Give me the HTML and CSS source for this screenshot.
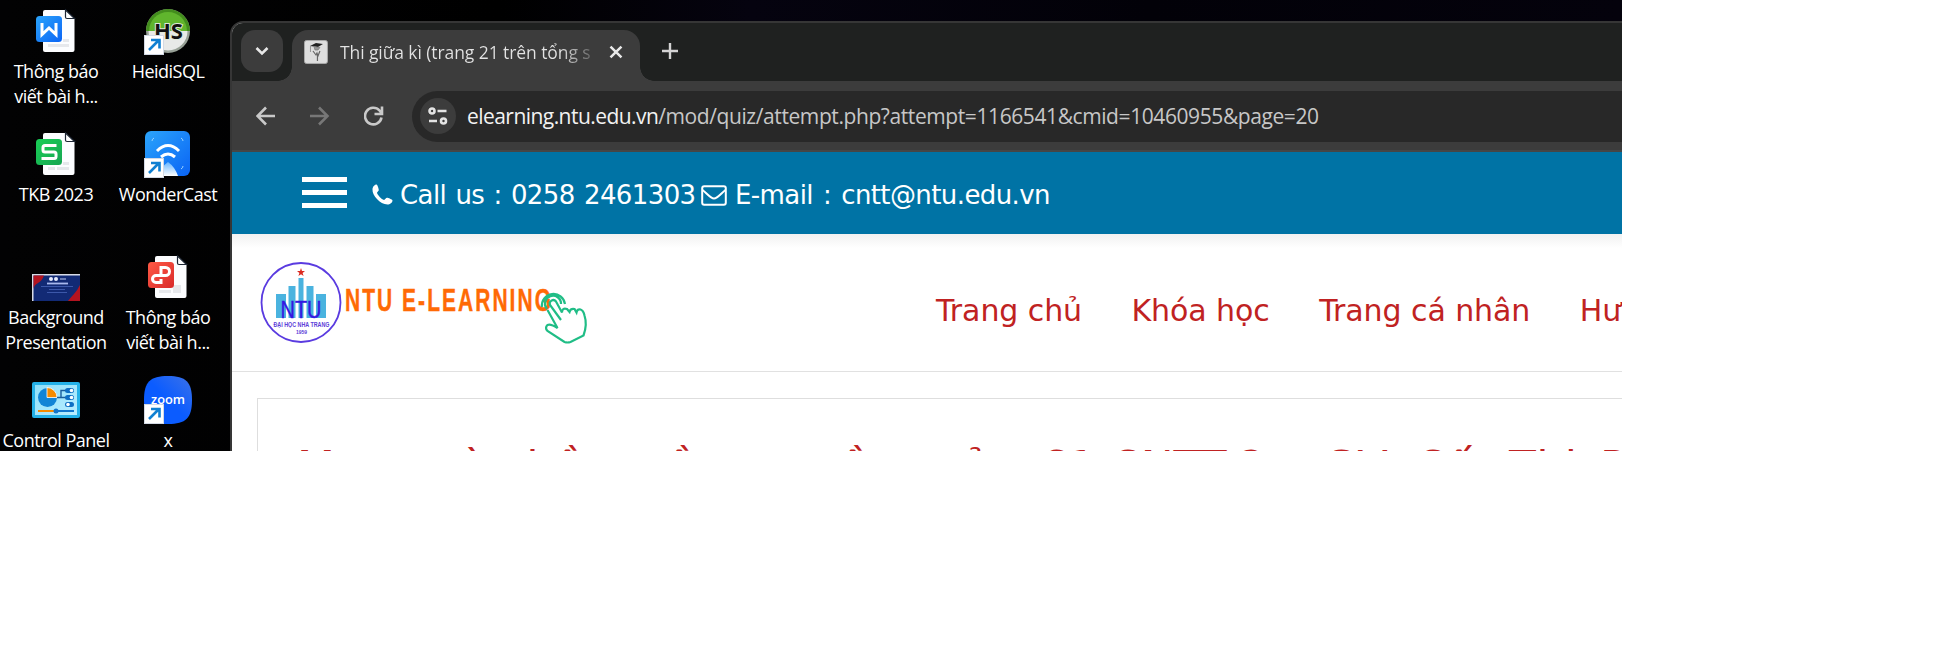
FILE: index.html
```html
<!DOCTYPE html>
<html lang="vi">
<head>
<meta charset="utf-8">
<title>Thi giữa kì</title>
<link rel="stylesheet" href="styles.css">
</head>
<body>
<svg width="0" height="0" class="defs">
  <defs>
    <linearGradient id="blue" x1="0" y1="0" x2="1" y2="1"><stop offset="0" stop-color="#2ba4fb"/><stop offset="1" stop-color="#0a64f5"/></linearGradient>
    <linearGradient id="green" x1="0" y1="0" x2="1" y2="1"><stop offset="0" stop-color="#19cf56"/><stop offset="1" stop-color="#16a552"/></linearGradient>
    <linearGradient id="red" x1="0" y1="0" x2="1" y2="1"><stop offset="0" stop-color="#ff5a45"/><stop offset="1" stop-color="#d92a2b"/></linearGradient>
    <linearGradient id="beam" x1="0" y1="0" x2="0" y2="1"><stop offset="0" stop-color="#66b5ff"/><stop offset="1" stop-color="#fff"/></linearGradient>
    <linearGradient id="zoomg" x1="0" y1="1" x2="1" y2="0"><stop offset="0.5" stop-color="#0b5cff"/><stop offset="1" stop-color="#3c72e8"/></linearGradient>
    <linearGradient id="panel" x1="0" y1="0" x2="1" y2="1"><stop offset="0" stop-color="#8fe0fa"/><stop offset="1" stop-color="#b9edff"/></linearGradient>
    <g id="page">
      <path d="M21 3h21l8.500 9v31a2 2 0 0 1-2 2H21a2 2 0 0 1-2-2V5a2 2 0 0 1 2-2z" fill="#fcfdff"/>
      <path d="M41.500 3v7a1.500 1.500 0 0 0 1.500 1.500h7.500z" fill="#fff" stroke="#1c2532" stroke-width="1.200"/>
    </g>
    <g id="shortcut">
      <rect x="0.500" y="28.500" width="19" height="19" fill="#fff" stroke="#d3d9e4"/>
      <path d="M5 43L15 33M7 33h8.500v8.500" fill="none" stroke="#1080d2" stroke-width="2.600"/>
    </g>
  </defs>
</svg>
<main class="shot">
  <section class="desktop">
    <div class="item">
      <svg width="56" height="48" viewBox="8 0 56 48"><use href="#page" x="4"/><path d="M43 33.500h6M28 38.500h21" stroke="#e6e8ec" stroke-width="3"/><rect x="16" y="9" width="26" height="26" rx="3.500" fill="url(#blue)"/><path d="M22 16v11.500l7-6.500 7 6.500V16" fill="none" stroke="#fff" stroke-width="3"/></svg>
      <p>Thông báo<br>viết bài h...</p>
    </div>
    <div class="item">
      <svg width="48" height="48" viewBox="0 0 48 48"><circle cx="24" cy="24" r="22" fill="#97a096"/><circle cx="24" cy="24" r="19.500" fill="#e8e9e8"/><path d="M2 24a22 22 0 0 1 44 0z" fill="#438d1d"/><path d="M5 24a19 19 0 0 1 38 0z" fill="#60b52d"/><text x="24.500" y="31.500" text-anchor="middle" class="hs">HS</text><use href="#shortcut"/></svg>
      <p>HeidiSQL</p>
    </div>
    <div class="item">
      <svg width="56" height="48" viewBox="8 0 56 48"><use href="#page" x="4"/><path d="M43 33.500h6M28 38.500h7M37 38.500h12" stroke="#e6e8ec" stroke-width="3"/><rect x="16" y="9" width="26" height="26" rx="3.500" fill="url(#green)"/><path d="M36.500 15.500H25a2 2 0 0 0-2 2V20a2 2 0 0 0 2 2h9a2 2 0 0 1 2 2v2.500a2 2 0 0 1-2 2H21.500" fill="none" stroke="#fff" stroke-width="3"/></svg>
      <p>TKB 2023</p>
    </div>
    <div class="item">
      <svg width="48" height="48" viewBox="0 0 48 48"><rect x="1" y="1" width="45" height="45" rx="6" fill="url(#blue)"/><path d="M13 21q11-11 22 0M17 27q7-6 14 0" fill="none" stroke="#fff" stroke-width="3"/><path d="M24 32q7 5 10 14H14q3-9 10-14z" fill="url(#beam)"/><path d="M8 11q0-2 2-3M37 8q2 1 2 3M39 36q0 2-2 3" fill="none" stroke="#9dd5ff"/><use href="#shortcut"/></svg>
      <p>WonderCast</p>
    </div>
    <div class="item">
      <svg width="48" height="48" viewBox="0 0 48 48"><rect x="0" y="21" width="48" height="27" fill="#122a75"/><path d="M0 21h48v1.500H1.500V48H0z" fill="#d8dbe6"/><path d="M1.500 22.500H12Q10 28 6 30t-4.500 6zM48 32q-3 6-6 9t-6 7h12z" fill="#b3131f"/><circle cx="19" cy="26" r="2" fill="#e7ecff"/><circle cx="24" cy="26" r="2" fill="#e7ecff"/><path d="M28 26h6" stroke="#c4cff5"/><path d="M15 30.500h21" stroke="#a9b9ee" stroke-width="1.800"/><path d="M9 33.500h32M17 36.500h16M15 39.500h20" stroke="#4865b8" stroke-width=".8"/></svg>
      <p>Background<br>Presentation</p>
    </div>
    <div class="item">
      <svg width="56" height="48" viewBox="8 0 56 48"><use href="#page" x="4"/><path d="M27 38.500h12" stroke="#e6e8ec" stroke-width="3"/><path d="M41 32h8v8h-8z" fill="#e6e8ec"/><rect x="16" y="9" width="26" height="26" rx="3.500" fill="url(#red)"/><path d="M29 21v-6.500h4.500a4 4 0 0 1 0 8H24a3.500 3.500 0 0 0 0 7h5V26" fill="none" stroke="#fff" stroke-width="3"/></svg>
      <p>Thông báo<br>viết bài h...</p>
    </div>
    <div class="item">
      <svg width="48" height="48" viewBox="0 0 48 48"><rect x="0" y="6" width="48" height="36" rx="2" fill="#24b1e8"/><rect x="3" y="9" width="42" height="30" fill="url(#panel)"/><circle cx="15.500" cy="21.500" r="9.500" fill="#1284d6"/><path d="M15 21.500V11.500a10 10 0 0 1 10 10z" fill="#f58b00" stroke="#fff" stroke-width=".8"/><path d="M25 21.500h4v-7h5M29 21.500h5" fill="none" stroke="#1a5d9c" stroke-width="1.400"/><g fill="#0f6fc4"><rect x="33" y="12" width="9" height="5" rx="2.500"/><rect x="33" y="19" width="9" height="5" rx="2.500"/><rect x="33" y="26" width="9" height="5" rx="2.500"/></g><g fill="#fff"><circle cx="39.500" cy="14.500" r="1.800"/><circle cx="39.500" cy="21.500" r="1.800"/><circle cx="36" cy="28.500" r="1.800"/></g><path d="M6 35h17" stroke="#f58b00" stroke-width="2"/><path d="M24 35h18" stroke="#1176cd" stroke-width="2"/><circle cx="24" cy="35" r="2.500" fill="#1176cd"/></svg>
      <p>Control Panel</p>
    </div>
    <div class="item">
      <svg width="48" height="48" viewBox="0 0 48 48"><path d="M24 0C42 0 48 6 48 24S42 48 24 48 0 42 0 24 6 0 24 0z" fill="url(#zoomg)"/><text x="7" y="28" textLength="34" lengthAdjust="spacingAndGlyphs" class="zoom">zoom</text><use href="#shortcut"/></svg>
      <p>x</p>
    </div>
  </section>

  <section class="window">
    <div class="tabs">
      <span class="tab-search"><svg width="14" height="10" viewBox="0 0 14 10"><path d="M1.500 2l5.500 5.500L12.500 2" fill="none" stroke="#e8e8e8" stroke-width="2.600"/></svg></span>
      <div class="tab">
        <svg class="favicon" width="24" height="24" viewBox="0 0 24 24"><rect x="0.500" y="0.500" width="23" height="23" rx="2" fill="#dedede" stroke="#aaa"/><path d="M6 6l6-3 7 1-5 3z" fill="#222"/><path d="M6.500 6v6M10 6.500l6 1-2 2.500h-3z" fill="#999" stroke="#777" stroke-width=".7"/><path d="M9 11l3 4 1-2 1 3 2-5M13.500 15v6" fill="none" stroke="#666" stroke-width="1.200"/></svg>
        <span class="tab-title">Thi giữa kì (trang 21 trên tổng s</span>
        <svg width="14" height="14" viewBox="0 0 14 14"><path d="M1.500 1.500l11 11M12.500 1.500l-11 11" stroke="#e8e8e8" stroke-width="2.500"/></svg>
      </div>
      <svg class="plus" width="16" height="16" viewBox="0 0 16 16"><path d="M8 0v16M0 8h16" stroke="#d4d4d4" stroke-width="2.400"/></svg>
    </div>
    <div class="toolbar">
      <svg class="nav-icon" width="20" height="20" viewBox="0 0 20 20"><path d="M19 10H2M10 1.500L1.500 10l8.500 8.500" fill="none" stroke="#c9c9c9" stroke-width="2.600"/></svg>
      <svg class="nav-icon" width="20" height="20" viewBox="0 0 20 20"><path d="M0 10h17M9 1.500l8.500 8.500L9 18.500" fill="none" stroke="#777" stroke-width="2.600"/></svg>
      <svg class="nav-icon" width="20" height="20" viewBox="0 0 20 20"><path d="M17.500 11.500A8.300 8.300 0 1 1 15.500 4.500l2 2.500M18 .5V8h-7.500" fill="none" stroke="#c9c9c9" stroke-width="2.600"/></svg>
      <div class="omnibox">
        <span class="site-info"><svg width="20" height="18" viewBox="0 0 20 18"><g fill="none" stroke="#e4e4e4" stroke-width="2.600"><circle cx="4" cy="4" r="2.500"/><path d="M9.500 4h9M1 14h8"/><circle cx="15.500" cy="14" r="2.500"/></g></svg></span>
        <span class="url"><b>elearning.ntu.edu.vn</b>/mod/quiz/attempt.php?attempt=1166541&amp;cmid=10460955&amp;page=20</span>
      </div>
    </div>
    <div class="contact">
      <span class="menu"><i></i><i></i><i></i></span>
      <svg class="phone" width="21" height="21" viewBox="0 0 21 21"><path d="M20.500 16.500c0 2-2.500 4-5 4C8 20.500 0 11 .5 5.500.5 3 2.500.5 4.500.5 5.500.5 6.800 5 6.800 6S5 8 5 8.800C5.500 11 9.500 15.500 12 16c1 0 2-2.200 3-2.200s5.500 1.700 5.500 2.700z" fill="#fff"/></svg>
      <span class="call">Call us : 0258 2461303</span>
      <svg class="mail" width="26" height="21" viewBox="0 0 26 21"><rect x="1.200" y="1.200" width="23.600" height="18.600" rx="2" fill="none" stroke="#fff" stroke-width="2"/><path d="M1.500 5c4 3 8 8.500 11.500 8.500S20.500 8 24.500 5" fill="none" stroke="#fff" stroke-width="2"/></svg>
      <span class="email">E-mail : cntt@ntu.edu.vn</span>
    </div>
    <header class="site-header">
      <svg class="logo" width="330" height="84" viewBox="0 0 330 84">
        <circle cx="41" cy="41.500" r="39.500" fill="#fff" stroke="#5a3be0" stroke-width="1.800"/>
        <path d="M41 7l1 3h3l-2.400 2 1 3-2.600-1.800L38.400 15l1-3L37 10h3z" fill="#dc2a20"/>
        <path d="M16 33h10v24H16zM28.500 25h7v32h-7zM38.500 17h5v40h-5zM46.500 25h7v32h-7zM56 33h10v24H56z" fill="#4ab3df"/>
        <text x="20.500" y="57" textLength="41" lengthAdjust="spacingAndGlyphs" class="ntu">NTU</text>
        <text x="13.500" y="66" textLength="56" lengthAdjust="spacingAndGlyphs" class="uni">ĐẠI HỌC NHA TRANG</text>
        <text x="41.500" y="73" text-anchor="middle" class="year">1959</text>
        <text x="85" y="49.500" textLength="208" lengthAdjust="spacingAndGlyphs" class="brand">NTU E-LEARNING</text>
        <g transform="translate(1 2)" fill="none" stroke="#20bd86" stroke-width="2.200"><path d="M300 57l-11-15a3.500 3.500 0 0 1 6-3.500l6 11q0-5 5-3.500l2.500 3q1-4 5-3l2 3.500q1-4 4-3 3 1 4 6 3 9-1 20l-13 6.500q-3 1-6 0l-17-11q-3-3 0-6 3-1.500 10 3l-10-18"/><path d="M286 46a8 8 0 1 1 14-5M281 44a11.500 11.500 0 1 1 23-3"/></g>
      </svg>
      <nav><a>Trang chủ</a><a>Khóa học</a><a>Trang cá nhân</a><a>Hướng dẫn</a></nav>
    </header>
    <div class="content"><h1><span class="w1">Mạng</span><span class="w2">và</span><span class="w3">phần</span><span class="w4">mềm</span><span class="w5">nguồn</span><span class="w6">mở</span><span class="w7">-</span><span class="w8">61.CNTT-2</span><span class="w9">-</span><span class="w10">GV:</span><span class="w11">Cấn</span><span class="w12">Thị</span><span>P</span></h1></div>
  </section>
</main>
</body>
</html>
```
FILE: styles.css
```css
* { box-sizing: border-box; }
body { margin: 0; background: #fff; }
.defs { display: block; height: 0; }
.shot {
  width: 1622px; height: 451px; overflow: hidden; display: flex;
  background: linear-gradient(90deg, #020203 0, #000 500px, #05030f 750px, #020108 1150px, #04020c 1622px);
}
.desktop {
  flex: none; width: 230px; padding-top: 7px;
  display: grid; grid-template-columns: 112px 112px; grid-auto-rows: 123px;
}
.item { display: flex; flex-direction: column; align-items: center; gap: 4px; }
.item svg { flex: none; display: block; }
.item p {
  margin: 0; white-space: nowrap; text-align: center; color: #fff;
  font: 18px/25px "Open Sans", "Noto Sans", sans-serif; letter-spacing: -0.5px;
}
.hs { font: bold 22px "Open Sans", sans-serif; fill: #111; stroke: #dfe8d8; stroke-width: 2px; paint-order: stroke; }
.zoom { font: 600 13px "Open Sans", sans-serif; fill: #fff; }
.window {
  flex: none; width: 1410px; height: 460px; margin-top: 21px;
  border: 2px solid #363636; border-radius: 13px 0 0 0; overflow: hidden; background: #fff;
}
.tabs { height: 58px; display: flex; background: #1f2120; }
.tab-search {
  width: 42px; height: 42px; margin: 7px 9px 0; border-radius: 14px; background: #3c3c3c;
  display: flex; align-items: center; justify-content: center;
}
.tab {
  width: 348px; height: 51px; margin-top: 7px; padding: 0 17px 8px 12px; position: relative;
  display: flex; align-items: center; background: #3c3c3c; border-radius: 16px 16px 0 0;
}
.tab::before, .tab::after { content: ""; position: absolute; bottom: 0; width: 14px; height: 14px; }
.tab::before { left: -14px; background: radial-gradient(circle at 0 0, transparent 13.5px, #3c3c3c 14px); }
.tab::after { right: -14px; background: radial-gradient(circle at 100% 0, transparent 13.5px, #3c3c3c 14px); }
.tab-title {
  width: 252px; margin: 1px 18px 0 12px; overflow: hidden; white-space: nowrap;
  font: 17.5px/26px "Open Sans", "Noto Sans", sans-serif; letter-spacing: -0.08px;
  color: transparent; background: linear-gradient(90deg, #e3e3e3 220px, #3c3c3c 262px); background-clip: text; -webkit-background-clip: text;
}
.plus { margin: 20px 0 0 22px; }
.toolbar {
  height: 71px; padding: 1px 0 0 24px; display: flex; align-items: center;
  background: #3c3c3c; border-bottom: 2px solid #464646;
}
.nav-icon { margin-right: 34px; flex: none; }
.omnibox {
  flex: 1; height: 51px; margin-left: -6px; padding-left: 8px; display: flex; align-items: center;
  background: #282828; border-radius: 26px 0 0 26px;
}
.site-info {
  width: 36px; height: 36px; border-radius: 50%; background: #3c3c3c;
  display: flex; align-items: center; justify-content: center;
}
.url { margin-left: 11px; white-space: nowrap; color: #c7c7c7; font: 21px/30px "Open Sans", "Noto Sans", sans-serif; letter-spacing: -0.41px; }
.url b { font-weight: 400; color: #f2f2f2; letter-spacing: -0.55px; }
.contact {
  height: 82px; padding-left: 70px; display: flex; align-items: center; background: #0073a5;
  color: #fff; font: 26px/34px "DejaVu Sans", sans-serif; letter-spacing: -0.6px; word-spacing: 1.6px; white-space: nowrap;
}
.menu { width: 45px; display: flex; flex-direction: column; gap: 8px; margin-bottom: 1px; }
.menu i { height: 5px; background: #fff; }
.phone { margin: 3px 7px 0 25px; }
.call { margin-top: 3px; width: 295px; }
.mail { margin: 4px 8px 0 6px; }
.email { margin-top: 3px; word-spacing: 2.4px; }
.site-header {
  height: 138px; display: flex; border-bottom: 1px solid #e1e1e1;
  background: linear-gradient(#f1f1f1, #fff 14px);
}
.logo { flex: none; margin: 27px 0 0 28px; }
.ntu { font: 23px "Liberation Sans", sans-serif; fill: #3518e2; stroke: #3518e2; stroke-width: .4px; }
.uni { font: bold 6.5px "Liberation Sans", sans-serif; fill: #5c40d8; }
.year { font: bold 5px "Liberation Sans", sans-serif; fill: #5c40d8; }
.brand { font: bold 31px "Liberation Sans", sans-serif; letter-spacing: 3px; fill: #ff6a05; stroke: #ff6a05; stroke-width: .4px; }
nav { display: flex; gap: 49.5px; padding: 57px 0 0 346px; white-space: nowrap; color: #c02222; font: 30px/40px "DejaVu Sans", sans-serif; letter-spacing: -0.08px; }
.content { height: 100px; margin: 26px 0 0 25px; border: 1px solid #dedede; }
h1 { margin: 0; padding: 42px 0 0 39px; display: flex; white-space: nowrap; color: #c02222; font: 400 44px/54px "DejaVu Sans", sans-serif; letter-spacing: 0.5px; }
h1 span { flex: none; }
.w1 { width: 139px; }
.w2 { width: 62px; }
.w3 { width: 124px; }
.w4 { width: 132px; }
.w5 { width: 164px; }
.w6 { width: 90px; }
.w7 { width: 32px; }
.w8 { width: 238px; letter-spacing: 0; }
.w9 { width: 45px; }
.w10 { width: 92px; }
.w11 { width: 94px; }
.w12 { width: 91px; }
```
